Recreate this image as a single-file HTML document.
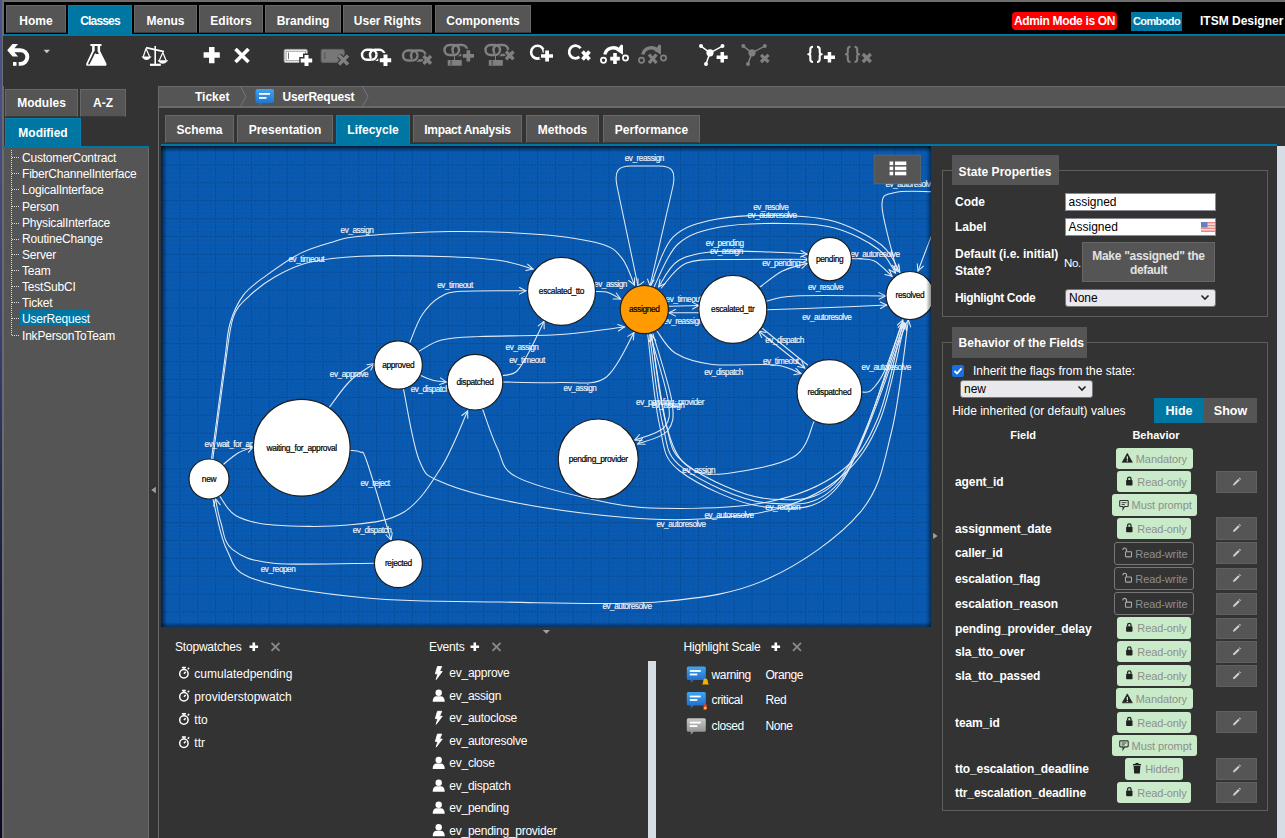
<!DOCTYPE html>
<html><head><meta charset="utf-8">
<style>
*{box-sizing:border-box;margin:0;padding:0}
html,body{width:1285px;height:838px;overflow:hidden;background:#333;font-family:"Liberation Sans",sans-serif;color:#fff}
.a{position:absolute}
.tab{position:absolute;background:#555;border:1px solid #686868;border-bottom-color:#3a3a3a;color:#fff;font-weight:bold;font-size:12px;text-align:center;white-space:nowrap}
.tab.on{background:#0077a3;border-color:#0a80ae;border-bottom-color:#0077a3}
.lbl{position:absolute;white-space:nowrap}
</style></head><body>
<!-- desktop strip -->
<div class="a" style="left:0;top:0;width:2px;height:838px;background:linear-gradient(#4a5590,#3a4070 40%,#1a1c40 70%,#0a0a25)"></div>
<div class="a" style="left:2px;top:0;width:1283px;height:1.5px;background:#6e6e6e"></div><div class="a" style="left:2px;top:0;width:1.5px;height:838px;background:#6e6e6e"></div>
<!-- top menu bar -->
<div class="a" style="left:3.5px;top:1.5px;width:1282px;height:32.5px;background:#000"></div>
<div class="a" style="left:3.5px;top:34px;width:1282px;height:2px;background:#0077a3"></div>
<div class="tab" style="left:6px;top:5px;width:60px;height:28px;line-height:30px">Home</div>
<div class="tab on" style="left:68px;top:5px;width:64px;height:30px;line-height:30px;letter-spacing:-0.85px">Classes</div>
<div class="tab" style="left:134px;top:5px;width:63px;height:28px;line-height:30px">Menus</div>
<div class="tab" style="left:199px;top:5px;width:64px;height:28px;line-height:30px">Editors</div>
<div class="tab" style="left:265px;top:5px;width:76px;height:28px;line-height:30px">Branding</div>
<div class="tab" style="left:343px;top:5px;width:89px;height:28px;line-height:30px">User Rights</div>
<div class="tab" style="left:435px;top:5px;width:96px;height:28px;line-height:30px">Components</div>
<div class="lbl" style="left:1012px;top:12px;width:105px;height:18px;background:#f00;border-radius:4px;font-weight:bold;font-size:12px;line-height:18px;text-align:center;letter-spacing:-0.35px">Admin Mode is ON</div>
<div class="lbl" style="left:1131px;top:12px;width:51px;height:19px;background:#0077a3;font-weight:bold;font-size:11px;line-height:19px;text-align:center;letter-spacing:-0.6px">Combodo</div>
<div class="lbl" style="left:1200px;top:12px;font-weight:bold;font-size:12px;line-height:18px">ITSM Designer</div>
<!-- toolbar -->
<div class="a" style="left:3px;top:36px;width:1282px;height:50px;background:#333"></div>
<svg class="a" style="left:0;top:0" width="900" height="86" viewBox="0 0 900 86">
<path d="M7.2 50.3 L12.5 44.1 H18.1 L14.4 48.2 H20.5 A8.8 8.8 0 0 1 20.5 65.8 H18.7 V61.9 H20.5 A4.85 4.85 0 0 0 20.5 52.2 H14.4 L18.1 56.6 H12.5 Z" fill="#fff"/>
<rect x="13" y="62" width="3.5" height="3.8" fill="#fff"/>
<path d="M43.6 49.7 H50 L46.8 53.3 Z" fill="#ccc"/>
<!-- flask -->
<path d="M90.4 43.9 H101.5 V46 H100.1 V51 L106.4 63.4 Q107.1 65.8 104.7 65.8 H87.9 Q85.5 65.8 86.3 63.4 L92.1 51 V46 H90.4 Z" fill="#fff"/>
<path d="M94.7 46 H97.6 V51.6 L99 53.9 H95.9 L94.7 52.3 Z" fill="#333"/>
<path d="M94.8 51.8 L89 63.7" stroke="#333" stroke-width="1.7" stroke-linecap="round"/>
<!-- scales -->
<g stroke="#fff" fill="none" stroke-width="1.6">
 <path d="M146 47.6 L164 51.6"/>
 <path d="M155.2 46 V64"/>
 <path d="M150 64.8 H160.8" stroke-width="2.2"/>
 <path d="M146 48.5 L143.2 57 M146 48.5 L149.8 57" stroke-width="1.2"/>
 <path d="M143 57.2 Q146.4 61.5 150 57.2 Z" fill="#fff" stroke-width="1.4"/>
 <path d="M162.8 52.5 L159.2 60.8 M162.8 52.5 L166.2 60.8" stroke-width="1.2"/>
 <path d="M159 61 Q162.8 65.2 166.6 61 Z" fill="#fff" stroke-width="1.4"/>
</g>
<!-- plus & x -->
<path d="M209 47 H214.5 V52.3 H219.8 V57.8 H214.5 V63.2 H209 V57.8 H203.6 V52.3 H209 Z" fill="#fff"/>
<path d="M235.5 49 L248.5 62 M248.5 49 L235.5 62" stroke="#fff" stroke-width="3.6"/>
<!-- attr add -->
<rect x="284.2" y="49.4" width="23" height="13" rx="1.5" fill="#fff" stroke="#aaa" stroke-width="1"/>
<rect x="286" y="51.2" width="19.5" height="9.5" fill="#fff" stroke="#888" stroke-width="0.8"/>
<path d="M288.5 52.5 V59" stroke="#777" stroke-width="1"/>
<path d="M304.5 55 H308.5 V58.5 H312.2 V62.5 H308.5 V66 H304.5 V62.5 H300.7 V58.5 H304.5 Z" fill="#fff" stroke="#333" stroke-width="3" paint-order="stroke"/>
<!-- attr del -->
<rect x="321.2" y="49.4" width="23" height="13" rx="1.5" fill="#777" stroke="#666" stroke-width="1"/>
<path d="M324.8 52.5 V59" stroke="#555" stroke-width="1"/>
<path d="M339 55.5 L348 64.5 M348 55.5 L339 64.5" stroke="#333" stroke-width="5.5"/>
<path d="M339 55.5 L348 64.5 M348 55.5 L339 64.5" stroke="#808080" stroke-width="3.4"/>
<!-- link add -->
<g fill="none" stroke="#fff" stroke-width="2.5"><rect x="362.0" y="49.8" width="14.5" height="10" rx="5"/><rect x="370.0" y="49.8" width="14.5" height="10" rx="5" stroke="#333" stroke-width="4.6" stroke-dasharray="0 17 9 100"/><rect x="370.0" y="49.8" width="14.5" height="10" rx="5"/><path d="M372.0,59.8 H371.5 A5 5 0 0 0 376.5,54.8" stroke="#333" stroke-width="4.6"/><path d="M371.5,59.8 A5 5 0 0 0 376.5,54.8"/></g>
<path d="M383.5 54.5 H387.5 V58.3 H391.2 V62.3 H387.5 V66 H383.5 V62.3 H379.8 V58.3 H383.5 Z" fill="#fff" stroke="#333" stroke-width="3" paint-order="stroke"/>
<!-- link del -->
<g fill="none" stroke="#808080" stroke-width="2.5"><rect x="403.0" y="50.6" width="14.5" height="10" rx="5"/><rect x="411.0" y="50.6" width="14.5" height="10" rx="5" stroke="#333" stroke-width="4.6" stroke-dasharray="0 17 9 100"/><rect x="411.0" y="50.6" width="14.5" height="10" rx="5"/><path d="M413.0,60.6 H412.5 A5 5 0 0 0 417.5,55.6" stroke="#333" stroke-width="4.6"/><path d="M412.5,60.6 A5 5 0 0 0 417.5,55.6"/></g>
<path d="M423.5 56 L431 63.8 M431 56 L423.5 63.8" stroke="#333" stroke-width="5.5"/>
<path d="M423.5 56 L431 63.8 M431 56 L423.5 63.8" stroke="#808080" stroke-width="3.4"/>
<!-- link sum add -->
<g fill="none" stroke="#808080" stroke-width="2.5"><rect x="444.5" y="45.0" width="14.5" height="10" rx="5"/><rect x="452.5" y="45.0" width="14.5" height="10" rx="5" stroke="#333" stroke-width="4.6" stroke-dasharray="0 17 9 100"/><rect x="452.5" y="45.0" width="14.5" height="10" rx="5"/><path d="M454.5,55.0 H454.0 A5 5 0 0 0 459.0,50.0" stroke="#333" stroke-width="4.6"/><path d="M454.0,55.0 A5 5 0 0 0 459.0,50.0"/></g>
<path d="M454.5 56 V60" stroke="#808080" stroke-width="1"/>
<rect x="447.7" y="60" width="14" height="5.7" fill="#808080"/>
<path d="M450 61.2 H452 L451 62.7 L452 64.2 H450" stroke="#444" stroke-width="0.8" fill="none"/>
<path d="M466.5 50.3 H470.2 V54 H474 V57.8 H470.2 V61.5 H466.5 V57.8 H462.8 V54 H466.5 Z" fill="#808080" stroke="#333" stroke-width="3" paint-order="stroke"/>
<!-- link sum del -->
<g fill="none" stroke="#808080" stroke-width="2.5"><rect x="485.5" y="45.0" width="14.5" height="10" rx="5"/><rect x="493.5" y="45.0" width="14.5" height="10" rx="5" stroke="#333" stroke-width="4.6" stroke-dasharray="0 17 9 100"/><rect x="493.5" y="45.0" width="14.5" height="10" rx="5"/><path d="M495.5,55.0 H495.0 A5 5 0 0 0 500.0,50.0" stroke="#333" stroke-width="4.6"/><path d="M495.0,55.0 A5 5 0 0 0 500.0,50.0"/></g>
<path d="M495.5 56 V60" stroke="#808080" stroke-width="1"/>
<rect x="488.8" y="60" width="14" height="5.7" fill="#808080"/>
<path d="M491 61.2 H493 L492 62.7 L493 64.2 H491" stroke="#444" stroke-width="0.8" fill="none"/>
<path d="M506 51.5 L513.5 59.3 M513.5 51.5 L506 59.3" stroke="#333" stroke-width="5.5"/>
<path d="M506 51.5 L513.5 59.3 M513.5 51.5 L506 59.3" stroke="#808080" stroke-width="3.4"/>
<!-- circle add/del -->
<circle cx="537.5" cy="52.2" r="6.4" fill="none" stroke="#fff" stroke-width="2.6"/>
<path d="M545.2 50.6 H549 V54.3 H553 V57.8 H549 V61.4 H545.2 V57.8 H541 V54.3 H545.2 Z" fill="#fff" stroke="#333" stroke-width="3" paint-order="stroke"/>
<path d="M580.6 48.3 A6.3 6.3 0 1 0 579.4 56.9" fill="none" stroke="#fff" stroke-width="2.7"/>
<path d="M582.5 51.5 L589.5 59.5 M589.5 51.5 L582.5 59.5" stroke="#333" stroke-width="6.5"/>
<path d="M582.5 51.5 L589.5 59.5 M589.5 51.5 L582.5 59.5" stroke="#fff" stroke-width="3.6"/>
<!-- transition add -->
<path d="M604.8 54.5 A8.6 8.6 0 0 1 619.5 50.5" fill="none" stroke="#fff" stroke-width="3.4"/>
<path d="M616.5 50.8 L621 44.6 L623 45.2 L623 54.8 Z" fill="#fff"/>
<circle cx="603.5" cy="60.2" r="2.6" fill="none" stroke="#fff" stroke-width="1.7"/>
<circle cx="625.5" cy="58" r="2.6" fill="none" stroke="#fff" stroke-width="1.7"/>
<path d="M613.2 53 H616.8 V56.8 H619.8 V60.4 H616.8 V64 H613.2 V60.4 H610.2 V56.8 H613.2 Z" fill="#fff" stroke="#333" stroke-width="3" paint-order="stroke"/>
<!-- transition del -->
<path d="M642.8 54.5 A8.6 8.6 0 0 1 657.5 50.5" fill="none" stroke="#808080" stroke-width="3.4"/>
<path d="M654.5 50.8 L659 44.6 L661 45.2 L661 54.8 Z" fill="#808080"/>
<circle cx="641.5" cy="60.2" r="2.6" fill="none" stroke="#808080" stroke-width="1.7"/>
<circle cx="663.5" cy="58" r="2.6" fill="none" stroke="#808080" stroke-width="1.7"/>
<path d="M649 54.5 L656.5 63 M656.5 54.5 L649 63" stroke="#333" stroke-width="6"/>
<path d="M649 54.5 L656.5 63 M656.5 54.5 L649 63" stroke="#808080" stroke-width="3.4"/>
<!-- node add -->
<g stroke="#fff" stroke-width="1.5" fill="none"><path d="M701 46.1 L710 52.8 L722.5 46.1 M710 52.8 L706 63.9"/></g>
<g fill="#fff"><circle cx="701" cy="46.1" r="2"/><circle cx="722.5" cy="46.1" r="2"/><circle cx="710" cy="52.8" r="3.6"/><circle cx="706" cy="63.9" r="2"/></g>
<path d="M720.5 52 H724 V55.4 H727.7 V58.9 H724 V62.4 H720.5 V58.9 H716.6 V55.4 H720.5 Z" fill="#fff"/>
<!-- node del -->
<g stroke="#808080" stroke-width="1.5" fill="none"><path d="M743.3 46.1 L752 52.8 L764.8 46.1 M752 52.8 L748 63.9"/></g>
<g fill="#808080"><circle cx="743.3" cy="46.1" r="2"/><circle cx="764.8" cy="46.1" r="2"/><circle cx="752" cy="52.8" r="3.6"/><circle cx="748" cy="63.9" r="2"/></g>
<path d="M761 54.8 L768.5 62 M768.5 54.8 L761 62" stroke="#808080" stroke-width="3.2"/>
</svg>
<svg class="a" style="left:0;top:0" width="900" height="86"><g fill="none" stroke="#fff" stroke-width="2.1" stroke-linejoin="round"><path d="M813.0,46.8 Q810.3,46.8 810.3,49.5 V52.3 Q810.3,54.2 808.3,54.2 Q810.3,54.2 810.3,56.1 V59.3 Q810.3,62 813.0,62"/><path d="M817.0,46.8 Q819.7,46.8 819.7,49.5 V52.3 Q819.7,54.2 821.7,54.2 Q819.7,54.2 819.7,56.1 V59.3 Q819.7,62 817.0,62"/></g><g fill="none" stroke="#808080" stroke-width="2.1" stroke-linejoin="round"><path d="M850.5,46.8 Q847.8,46.8 847.8,49.5 V52.3 Q847.8,54.2 845.8,54.2 Q847.8,54.2 847.8,56.1 V59.3 Q847.8,62 850.5,62"/><path d="M854.5,46.8 Q857.2,46.8 857.2,49.5 V52.3 Q857.2,54.2 859.2,54.2 Q857.2,54.2 857.2,56.1 V59.3 Q857.2,62 854.5,62"/></g></svg>
<svg class="a" style="left:0;top:0" width="900" height="86" viewBox="0 0 900 86">
<path d="M827.7 52 H831.2 V55.4 H835 V58.9 H831.2 V62.4 H827.7 V58.9 H823.9 V55.4 H827.7 Z" fill="#fff"/>
<path d="M862.8 54 L870.8 62 M870.8 54 L862.8 62" stroke="#808080" stroke-width="3.2"/>
</svg>



<!-- left sidebar -->
<div class="a" style="left:2px;top:86px;width:2px;height:752px;background:#6b6b6b"></div>
<div class="tab" style="left:5px;top:89px;width:73px;height:28px;line-height:26px">Modules</div>
<div class="tab" style="left:80px;top:89px;width:46px;height:28px;line-height:26px">A-Z</div>
<div class="tab on" style="left:5px;top:118px;width:76px;height:29px;line-height:29px">Modified</div>
<div class="a" style="left:3px;top:146px;width:146px;height:2px;background:#0077a3"></div>
<div class="a" style="left:4px;top:148px;width:145px;height:690px;background:#555;border-right:1.5px solid #6a6a6a"></div>
<svg class="a" style="left:0;top:0" width="150" height="345"><g stroke="#ddd" stroke-width="1" stroke-dasharray="1 1">
<path d="M11.5 150 V336"/>
<path d="M12 157.5 H19"/>
<path d="M12 173.5 H19"/>
<path d="M12 189.5 H19"/>
<path d="M12 206.5 H19"/>
<path d="M12 223.5 H19"/>
<path d="M12 239.5 H19"/>
<path d="M12 254.5 H19"/>
<path d="M12 270.5 H19"/>
<path d="M12 286.5 H19"/>
<path d="M12 302.5 H19"/>
<path d="M12 318.5 H19"/>
<path d="M12 335.5 H19"/>
</g></svg>
<div class="a" style="left:20px;top:310px;width:70px;height:15px;background:#0077a3"></div>
<div class="lbl" style="left:22px;top:149.8px;font-size:12px;line-height:16px;letter-spacing:-0.2px">CustomerContract</div>
<div class="lbl" style="left:22px;top:165.6px;font-size:12px;line-height:16px;letter-spacing:-0.2px">FiberChannelInterface</div>
<div class="lbl" style="left:22px;top:181.9px;font-size:12px;line-height:16px;letter-spacing:-0.2px">LogicalInterface</div>
<div class="lbl" style="left:22px;top:198.5px;font-size:12px;line-height:16px;letter-spacing:-0.2px">Person</div>
<div class="lbl" style="left:22px;top:215.0px;font-size:12px;line-height:16px;letter-spacing:-0.2px">PhysicalInterface</div>
<div class="lbl" style="left:22px;top:231.0px;font-size:12px;line-height:16px;letter-spacing:-0.2px">RoutineChange</div>
<div class="lbl" style="left:22px;top:246.8px;font-size:12px;line-height:16px;letter-spacing:-0.2px">Server</div>
<div class="lbl" style="left:22px;top:262.7px;font-size:12px;line-height:16px;letter-spacing:-0.2px">Team</div>
<div class="lbl" style="left:22px;top:278.7px;font-size:12px;line-height:16px;letter-spacing:-0.2px">TestSubCI</div>
<div class="lbl" style="left:22px;top:294.7px;font-size:12px;line-height:16px;letter-spacing:-0.2px">Ticket</div>
<div class="lbl" style="left:22px;top:310.5px;font-size:12px;line-height:16px;letter-spacing:-0.2px">UserRequest</div>
<div class="lbl" style="left:22px;top:327.5px;font-size:12px;line-height:16px;letter-spacing:-0.2px">InkPersonToTeam</div>

<!-- breadcrumb bar -->
<div class="a" style="left:158px;top:86px;width:1127px;height:21px;background:#555;border-top:1px solid #6a6a6a"></div>
<div class="a" style="left:158px;top:106px;width:1127px;height:2px;background:#6a6a6a"></div>
<div class="a" style="left:158px;top:86px;width:1.4px;height:752px;background:#6a6a6a"></div>
<div class="lbl" style="left:195px;top:89px;font-size:12px;font-weight:bold;line-height:16px">Ticket</div>
<svg class="a" style="left:0;top:0" width="380" height="108"><g fill="none" stroke="#777" stroke-width="1"><path d="M240.5 86.5 L246 96.5 L240.5 106.5"/><path d="M362.5 86.5 L368 96.5 L362.5 106.5"/></g>
<defs><linearGradient id="bub" x1="0" y1="0" x2="0" y2="1"><stop offset="0" stop-color="#3fa4f0"/><stop offset="1" stop-color="#1b6cc8"/></linearGradient></defs>
<path d="M257.5 89 H272 Q274 89 274 91 V101 Q274 103 272 103 H262 L259 106 V103 H257.5 Q255.5 103 255.5 101 V91 Q255.5 89 257.5 89 Z" fill="url(#bub)"/>
<rect x="259" y="93" width="11" height="1.8" fill="#fff"/><rect x="259" y="97" width="7.5" height="1.8" fill="#fff"/></svg>
<div class="lbl" style="left:282.5px;top:89px;font-size:12px;font-weight:bold;line-height:16px;letter-spacing:-0.2px">UserRequest</div>


<!-- tabs -->
<div class="tab" style="left:165px;top:115px;width:69px;height:28px;line-height:29px">Schema</div>
<div class="tab" style="left:237px;top:115px;width:96px;height:28px;line-height:29px">Presentation</div>
<div class="tab on" style="left:336px;top:115px;width:74px;height:29px;line-height:29px">Lifecycle</div>
<div class="tab" style="left:413px;top:115px;width:109px;height:28px;line-height:29px;letter-spacing:-0.3px">Impact Analysis</div>
<div class="tab" style="left:526px;top:115px;width:73px;height:28px;line-height:29px">Methods</div>
<div class="tab" style="left:603px;top:115px;width:97px;height:28px;line-height:29px">Performance</div>
<div class="a" style="left:161px;top:144px;width:1116px;height:2px;background:#0077a3"></div>

<!-- diagram -->
<!--DIAG-START--><svg class="a" style="left:161px;top:146px" width="770" height="481" viewBox="161 146 770 481">
<defs>
<pattern id="grid" x="179.4" y="164.4" width="17.88" height="17.88" patternUnits="userSpaceOnUse">
<path d="M0.5 0 V17.88 M0 0.5 H17.88" stroke="#023468" stroke-width="1" stroke-dasharray="1.5 1.5" opacity="0.6"/>
<path d="M4.47 0 V17.88 M8.94 0 V17.88 M13.41 0 V17.88 M0 4.47 H17.88 M0 8.94 H17.88 M0 13.41 H17.88" stroke="#04468c" stroke-width="0.6" opacity="0.25"/>
</pattern>
<linearGradient id="shT" x1="0" y1="0" x2="0" y2="1"><stop offset="0" stop-color="#000" stop-opacity="0.7"/><stop offset="1" stop-color="#000" stop-opacity="0"/></linearGradient>
<linearGradient id="shL" x1="0" y1="0" x2="1" y2="0"><stop offset="0" stop-color="#000" stop-opacity="0.6"/><stop offset="1" stop-color="#000" stop-opacity="0"/></linearGradient>
<linearGradient id="shR" x1="1" y1="0" x2="0" y2="0"><stop offset="0" stop-color="#000" stop-opacity="0.45"/><stop offset="1" stop-color="#000" stop-opacity="0"/></linearGradient>
<linearGradient id="shB" x1="0" y1="1" x2="0" y2="0"><stop offset="0" stop-color="#000" stop-opacity="0.45"/><stop offset="1" stop-color="#000" stop-opacity="0"/></linearGradient>
</defs>
<rect x="161" y="146" width="770" height="481" fill="#095ab2"/>
<rect x="161" y="146" width="770" height="481" fill="url(#grid)"/>
<g fill="none" stroke="#e3ebf5" stroke-width="1.05" stroke-linecap="round">
<path d="M211.5,459.0 C213.7,442.5 221.6,382.6 224.7,360.0 C227.8,337.4 226.9,334.3 230.0,323.5 C233.1,312.7 237.3,303.2 243.4,295.1 C249.5,287.0 257.3,282.1 266.8,275.1 C276.3,268.2 289.1,259.0 300.2,253.4 C311.3,247.8 323.6,244.6 333.6,241.7 C343.6,238.8 340.6,237.9 360.0,236.2 C379.4,234.5 420.0,231.8 450.0,231.5 C480.0,231.2 514.9,232.4 540.0,234.5 C565.1,236.6 586.8,239.9 600.4,243.8 C614.0,247.7 616.2,251.2 621.9,258.1 C627.6,265.0 632.3,280.5 634.4,285.0"/>
<path d="M-6.5,-3.3 L0,0 L-6.5,3.3" transform="translate(634.4,285.0) rotate(65.0)"/>
<path d="M212.8,459.0 C215.0,442.5 222.5,383.7 225.9,360.0 C229.3,336.3 229.7,327.3 233.4,316.8 C237.2,306.3 241.4,303.5 248.4,296.8 C255.4,290.1 265.1,282.5 275.1,276.8 C285.1,271.1 294.4,266.0 308.5,262.6 C322.6,259.2 337.8,257.2 360.0,256.2 C382.2,255.2 418.2,255.8 441.5,256.5 C464.8,257.2 484.8,258.4 500.0,260.5 C515.2,262.6 527.5,267.6 533.0,269.0"/>
<path d="M-6.5,-3.3 L0,0 L-6.5,3.3" transform="translate(533.0,269.0) rotate(14.3)"/>
<path d="M595.0,291.5 C597.2,291.7 603.8,291.2 608.0,292.5 C612.2,293.8 618.4,297.9 620.5,299.0"/>
<path d="M-6.5,-3.3 L0,0 L-6.5,3.3" transform="translate(620.5,299.0) rotate(27.6)"/>
<path d="M410.0,342.0 C412.0,337.5 417.0,322.5 422.0,315.0 C427.0,307.5 433.3,300.9 440.0,297.0 C446.7,293.1 447.7,292.3 462.0,291.3 C476.3,290.3 515.3,290.9 526.0,290.8"/>
<path d="M-6.5,-3.3 L0,0 L-6.5,3.3" transform="translate(526.0,290.8) rotate(-0.5)"/>
<path d="M419.0,351.3 C422.8,349.4 431.3,342.5 441.5,340.0 C451.7,337.5 460.2,337.4 480.0,336.5 C499.8,335.6 535.9,336.1 560.0,334.5 C584.1,332.9 613.8,328.2 624.5,327.0"/>
<path d="M-6.5,-3.3 L0,0 L-6.5,3.3" transform="translate(624.5,327.0) rotate(-6.4)"/>
<path d="M503.0,375.6 C505.3,374.8 512.5,375.3 517.0,371.0 C521.5,366.7 525.5,358.3 530.0,350.0 C534.5,341.7 541.7,326.2 544.0,321.4"/>
<path d="M-6.5,-3.3 L0,0 L-6.5,3.3" transform="translate(544.0,321.4) rotate(-64.4)"/>
<path d="M503.0,382.0 C512.5,382.1 543.0,383.2 560.0,382.5 C577.0,381.8 592.7,386.3 605.0,378.0 C617.3,369.7 629.2,340.2 634.0,332.6"/>
<path d="M-6.5,-3.3 L0,0 L-6.5,3.3" transform="translate(634.0,332.6) rotate(-57.7)"/>
<path d="M419.0,374.8 C421.2,375.7 427.4,378.8 432.0,380.0 C436.6,381.2 444.1,381.7 446.5,382.0"/>
<path d="M-6.5,-3.3 L0,0 L-6.5,3.3" transform="translate(446.5,382.0) rotate(7.1)"/>
<path d="M329.4,407.3 C332.8,402.9 342.5,388.3 350.0,381.0 C357.5,373.7 370.2,366.5 374.2,363.6"/>
<path d="M-6.5,-3.3 L0,0 L-6.5,3.3" transform="translate(374.2,363.6) rotate(-35.9)"/>
<path d="M223.4,464.4 C225.8,462.5 233.0,455.9 238.0,453.0 C243.0,450.1 250.8,447.8 253.4,446.8"/>
<path d="M-6.5,-3.3 L0,0 L-6.5,3.3" transform="translate(253.4,446.8) rotate(-21.0)"/>
<path d="M219.2,495.3 C222.0,498.7 227.0,510.8 236.0,515.8 C245.0,520.8 254.7,523.5 273.4,525.0 C292.1,526.5 326.2,527.2 348.0,525.0 C369.8,522.8 388.4,521.7 404.0,512.0 C419.6,502.3 430.9,483.8 441.5,467.0 C452.1,450.2 463.2,420.3 467.6,411.0"/>
<path d="M-6.5,-3.3 L0,0 L-6.5,3.3" transform="translate(467.6,411.0) rotate(-64.7)"/>
<path d="M350.0,450.4 C351.7,450.7 357.2,450.1 360.0,452.0 C362.8,453.9 361.8,447.3 367.0,462.0 C372.2,476.7 387.0,527.0 391.0,540.0"/>
<path d="M-6.5,-3.3 L0,0 L-6.5,3.3" transform="translate(391.0,540.0) rotate(72.9)"/>
<path d="M374.2,563.2 C357.4,563.2 297.0,565.5 273.4,563.2 C249.7,560.9 241.0,556.1 232.3,549.4 C223.6,542.7 223.8,531.4 221.0,523.0 C218.2,514.6 216.4,503.0 215.5,499.0"/>
<path d="M-6.5,-3.3 L0,0 L-6.5,3.3" transform="translate(215.5,499.0) rotate(-102.7)"/>
<path d="M213.0,499.0 C215.3,507.4 219.8,536.0 226.7,549.4 C233.6,562.8 231.3,571.2 254.7,579.3 C278.1,587.4 325.9,594.2 366.8,598.0 C407.7,601.8 451.1,601.4 500.0,602.0 C548.9,602.6 615.4,605.6 660.0,601.7 C704.6,597.8 734.5,593.7 767.9,578.8 C801.3,563.9 839.7,536.8 860.3,512.2 C880.9,487.6 883.7,463.0 891.7,431.0 C899.7,399.0 905.6,338.5 908.4,320.0"/>
<path d="M-6.5,-3.3 L0,0 L-6.5,3.3" transform="translate(908.4,320.0) rotate(-81.4)"/>
<path d="M403.4,388.6 C406.0,400.5 412.6,444.2 419.0,459.8 C425.4,475.4 425.3,474.9 441.5,482.0 C457.7,489.1 486.2,496.9 516.0,502.7 C545.8,508.5 589.3,514.3 620.0,517.0 C650.7,519.7 673.3,520.5 700.0,519.0 C726.7,517.5 756.3,515.2 780.0,508.0 C803.7,500.8 825.3,490.7 842.0,476.0 C858.7,461.3 869.5,445.5 880.0,420.0 C890.5,394.5 900.6,339.2 904.7,323.0"/>
<path d="M-6.5,-3.3 L0,0 L-6.5,3.3" transform="translate(904.7,323.0) rotate(-75.8)"/>
<path d="M482.6,409.3 C485.1,415.9 491.9,437.4 497.5,448.6 C503.1,459.8 500.4,468.2 516.0,476.6 C531.6,485.0 567.0,493.7 591.0,499.0 C615.0,504.3 630.5,507.8 660.0,508.3 C689.5,508.8 737.9,508.1 767.9,502.0 C797.9,495.9 821.6,486.0 840.0,472.0 C858.4,458.0 867.5,443.0 878.0,418.0 C888.5,393.0 898.8,338.0 903.0,322.0"/>
<path d="M-6.5,-3.3 L0,0 L-6.5,3.3" transform="translate(903.0,322.0) rotate(-75.3)"/>
<path d="M657.0,331.0 C660.1,334.7 666.3,347.7 675.5,353.3 C684.7,358.9 695.8,362.4 712.4,364.4 C729.0,366.3 760.2,363.5 775.0,365.0 C789.8,366.5 796.7,372.2 801.0,373.6"/>
<path d="M-6.5,-3.3 L0,0 L-6.5,3.3" transform="translate(801.0,373.6) rotate(18.0)"/>
<path d="M758.6,331.0 L804.8,368.0"/>
<path d="M-6.5,-3.3 L0,0 L-6.5,3.3" transform="translate(804.8,368.0) rotate(38.7)"/>
<path d="M-6.5,-3.3 L0,0 L-6.5,3.3" transform="translate(758.6,331.0) rotate(-141.3)"/>
<path d="M762.5,328.5 L807.5,365.0"/>
<path d="M862.0,392.0 C863.6,391.7 867.6,393.9 871.4,390.2 C875.2,386.5 879.8,381.7 885.0,370.0 C890.2,358.3 899.8,328.3 902.8,320.0"/>
<path d="M-6.5,-3.3 L0,0 L-6.5,3.3" transform="translate(902.8,320.0) rotate(-70.1)"/>
<path d="M814.0,421.7 C810.6,427.6 808.3,448.2 793.8,456.8 C779.3,465.4 744.5,471.5 727.2,473.4 C709.9,475.2 699.9,475.0 690.0,467.9 C680.1,460.8 674.4,453.2 668.0,431.0 C661.6,408.8 654.2,350.8 651.4,334.8"/>
<path d="M-6.5,-3.3 L0,0 L-6.5,3.3" transform="translate(651.4,334.8) rotate(-99.9)"/>
<path d="M649.6,334.8 C651.8,349.6 657.0,401.3 662.5,423.5 C668.0,445.7 665.2,454.6 682.8,467.9 C700.4,481.1 741.4,501.1 767.9,503.0 C794.4,504.9 818.8,508.9 841.8,479.0 C864.8,449.1 895.3,349.6 906.0,323.7"/>
<path d="M-6.5,-3.3 L0,0 L-6.5,3.3" transform="translate(906.0,323.7) rotate(-67.6)"/>
<path d="M651.5,334.5 C653.8,349.1 659.6,400.2 665.5,422.0 C671.4,443.8 669.4,452.2 686.8,465.0 C704.2,477.8 744.0,497.5 770.0,499.0 C796.0,500.5 820.7,503.2 843.0,474.0 C865.3,444.8 893.8,348.8 904.0,323.7"/>
<path d="M647.8,335.0 C649.8,350.0 654.2,402.3 659.5,425.0 C664.8,447.7 662.1,457.3 679.8,471.0 C697.5,484.7 739.1,505.0 765.9,507.0 C792.7,509.0 818.1,513.5 840.8,483.0 C863.5,452.4 891.8,350.2 902.0,323.7"/>
<path d="M650.0,334.0 C653.0,345.0 665.6,384.5 668.0,400.0 C670.4,415.5 669.9,420.5 664.4,427.2 C658.9,433.9 639.7,438.0 634.8,440.1"/>
<path d="M-6.5,-3.3 L0,0 L-6.5,3.3" transform="translate(634.8,440.1) rotate(156.8)"/>
<path d="M653.0,334.0 C656.2,345.3 669.6,385.8 672.0,402.0 C674.4,418.2 673.1,424.0 667.4,431.0 C661.7,438.0 642.7,441.8 637.8,444.0"/>
<path d="M-6.5,-3.3 L0,0 L-6.5,3.3" transform="translate(637.8,444.0) rotate(155.8)"/>
<path d="M931.0,191.6 C925.0,191.7 903.2,190.0 895.0,192.4 C886.8,194.8 881.7,192.9 882.0,206.0 C882.3,219.1 894.5,260.2 897.0,271.0"/>
<path d="M-6.5,-3.3 L0,0 L-6.5,3.3" transform="translate(897.0,271.0) rotate(77.0)"/>
<path d="M931.0,237.0 L918.0,271.0"/>
<path d="M-6.5,-3.3 L0,0 L-6.5,3.3" transform="translate(918.0,271.0) rotate(110.9)"/>
<path d="M650.8,285.5 C654.5,277.4 661.9,248.3 673.0,237.2 C684.1,226.1 699.0,222.6 717.3,219.0 C735.5,215.4 763.0,215.1 782.5,215.5 C802.0,215.9 818.1,216.7 834.6,221.6 C851.1,226.5 870.6,236.5 881.5,245.0 C892.4,253.5 896.8,267.8 899.8,272.4"/>
<path d="M-6.5,-3.3 L0,0 L-6.5,3.3" transform="translate(899.8,272.4) rotate(56.9)"/>
<path d="M654.0,287.0 C658.0,279.8 667.0,254.0 678.0,244.0 C689.0,234.0 702.6,230.4 720.0,227.0 C737.4,223.6 763.4,223.2 782.5,223.4 C801.6,223.6 818.7,223.7 834.6,228.0 C850.5,232.3 867.9,241.5 878.0,249.0 C888.1,256.5 892.6,269.0 895.5,273.0"/>
<path d="M-6.5,-3.3 L0,0 L-6.5,3.3" transform="translate(895.5,273.0) rotate(54.1)"/>
<path d="M658.7,286.8 C662.0,282.4 668.4,266.6 678.2,260.7 C688.0,254.8 699.9,253.0 717.3,251.6 C734.7,250.2 767.5,252.0 782.5,252.4 C797.5,252.8 803.1,253.9 807.2,254.2"/>
<path d="M-6.5,-3.3 L0,0 L-6.5,3.3" transform="translate(807.2,254.2) rotate(4.2)"/>
<path d="M-6.5,-3.3 L0,0 L-6.5,3.3" transform="translate(658.7,286.8) rotate(126.9)"/>
<path d="M661.3,288.0 C665.4,283.9 674.5,268.1 686.0,263.3 C697.5,258.5 709.9,260.0 730.3,259.4 C750.7,258.8 795.5,259.4 808.5,259.4"/>
<path d="M-6.5,-3.3 L0,0 L-6.5,3.3" transform="translate(808.5,259.4) rotate(0.0)"/>
<path d="M760.3,286.8 C764.0,284.2 774.7,274.9 782.5,271.0 C790.3,267.1 803.1,264.6 807.2,263.3"/>
<path d="M-6.5,-3.3 L0,0 L-6.5,3.3" transform="translate(807.2,263.3) rotate(-17.6)"/>
<path d="M851.6,258.6 C855.3,259.0 867.0,257.8 873.7,260.7 C880.4,263.6 889.0,273.7 892.0,276.3"/>
<path d="M-6.5,-3.3 L0,0 L-6.5,3.3" transform="translate(892.0,276.3) rotate(40.9)"/>
<path d="M766.8,301.0 C771.6,300.1 775.7,296.8 795.5,295.9 C815.3,295.0 870.5,295.9 885.5,295.9"/>
<path d="M-6.5,-3.3 L0,0 L-6.5,3.3" transform="translate(885.5,295.9) rotate(0.0)"/>
<path d="M766.8,309.7 C777.3,309.3 810.0,308.3 830.0,307.5 C850.0,306.7 877.3,305.4 886.8,305.0"/>
<path d="M-6.5,-3.3 L0,0 L-6.5,3.3" transform="translate(886.8,305.0) rotate(-2.4)"/>
<path d="M669.0,306.3 L699.0,305.5"/>
<path d="M-6.5,-3.3 L0,0 L-6.5,3.3" transform="translate(699.0,305.5) rotate(-1.5)"/>
<path d="M699.0,312.8 L669.0,312.8"/>
<path d="M-6.5,-3.3 L0,0 L-6.5,3.3" transform="translate(669.0,312.8) rotate(180.0)"/>
<path d="M638,286 L617,186 C614,171 618,166 631,166 L659,166 C672,166 676,171 673,186 L650,286"/>
<path d="M-6.5,-3.3 L0,0 L-6.5,3.3" transform="translate(638.0,286.0) rotate(116.6)"/>
<path d="M-6.5,-3.3 L0,0 L-6.5,3.3" transform="translate(650.0,286.0) rotate(97.1)"/>
</g>
<g font-family="Liberation Sans" font-size="8.2" letter-spacing="-0.45" text-anchor="middle" fill="#f4f8fc" stroke="#f4f8fc" stroke-width="0.15">
<text x="644.3" y="161.3">ev_reassign</text>
<text x="357" y="232.5">ev_assign</text>
<text x="306.3" y="262.2">ev_timeout</text>
<text x="455" y="288">ev_timeout</text>
<text x="610.5" y="287.2">ev_assign</text>
<text x="683.4" y="301.5">ev_timeout</text>
<text x="683" y="323.7">ev_reassign</text>
<text x="770.7" y="210.3">ev_resolve</text>
<text x="772" y="218">ev_autoresolve</text>
<text x="724.6" y="246">ev_pending</text>
<text x="726.4" y="254.1">ev_assign</text>
<text x="781.2" y="266.3">ev_pending</text>
<text x="875" y="257.2">ev_autoresolve</text>
<text x="825.5" y="289.8">ev_resolve</text>
<text x="826.8" y="320.3">ev_autoresolve</text>
<text x="910" y="186.5">ev_autoresolve</text>
<text x="349" y="376.5">ev_approve</text>
<text x="430" y="392">ev_dispatch</text>
<text x="239" y="447.3">ev_wait_for_approval</text>
<text x="522" y="350">ev_assign</text>
<text x="527" y="362.5">ev_timeout</text>
<text x="580" y="390.5">ev_assign</text>
<text x="375" y="486">ev_reject</text>
<text x="372" y="533">ev_dispatch</text>
<text x="278" y="572">ev_reopen</text>
<text x="627" y="609">ev_autoresolve</text>
<text x="784.5" y="343.3">ev_dispatch</text>
<text x="780.8" y="363.7">ev_timeout</text>
<text x="723.5" y="374.8">ev_dispatch</text>
<text x="886.2" y="370.3">ev_autoresolve</text>
<text x="670" y="405">ev_pending_provider</text>
<text x="668" y="408">ev_assign</text>
<text x="698.7" y="472.7">ev_assign</text>
<text x="782.7" y="510.4">ev_reopen</text>
<text x="729" y="517.8">ev_autoresolve</text>
<text x="681" y="527">ev_autoresolve</text>
</g>
<circle cx="209" cy="479" r="20" fill="#fff" stroke="#1e1e1e" stroke-width="1.2"/>
<circle cx="301.7" cy="447.7" r="48.4" fill="#fff" stroke="#1e1e1e" stroke-width="1.2"/>
<circle cx="398.2" cy="365" r="24.2" fill="#fff" stroke="#1e1e1e" stroke-width="1.2"/>
<circle cx="475" cy="382.2" r="27.8" fill="#fff" stroke="#1e1e1e" stroke-width="1.2"/>
<circle cx="398.4" cy="563.6" r="24" fill="#fff" stroke="#1e1e1e" stroke-width="1.2"/>
<circle cx="561.5" cy="291.3" r="34" fill="#fff" stroke="#1e1e1e" stroke-width="1.2"/>
<circle cx="644.3" cy="309.6" r="24.1" fill="#ff9a00" stroke="#1e1e1e" stroke-width="1.2"/>
<circle cx="732.8" cy="309.3" r="34" fill="#fff" stroke="#1e1e1e" stroke-width="1.2"/>
<circle cx="829.6" cy="259.1" r="21.8" fill="#fff" stroke="#1e1e1e" stroke-width="1.2"/>
<circle cx="910" cy="295.5" r="24" fill="#fff" stroke="#1e1e1e" stroke-width="1.2"/>
<circle cx="829.4" cy="392" r="32.4" fill="#fff" stroke="#1e1e1e" stroke-width="1.2"/>
<circle cx="598.2" cy="459" r="40" fill="#fff" stroke="#1e1e1e" stroke-width="1.2"/>
<g font-family="Liberation Sans" font-size="8.4" letter-spacing="-0.35" text-anchor="middle" fill="#000" stroke="#000" stroke-width="0.2">
<text x="209" y="481.8">new</text>
<text x="301.7" y="450.5">waiting_for_approval</text>
<text x="398.2" y="367.8">approved</text>
<text x="475" y="385.0">dispatched</text>
<text x="398.4" y="566.4">rejected</text>
<text x="561.5" y="294.1">escalated_tto</text>
<text x="644.3" y="312.40000000000003">assigned</text>
<text x="732.8" y="312.1">escalated_ttr</text>
<text x="829.6" y="261.90000000000003">pending</text>
<text x="910" y="298.3">resolved</text>
<text x="829.4" y="394.8">redispatched</text>
<text x="598.2" y="461.8">pending_provider</text>
</g>
<rect x="161" y="146" width="770" height="6" fill="url(#shT)"/>
<rect x="161" y="146" width="6" height="481" fill="url(#shL)"/>
<rect x="926" y="146" width="5" height="481" fill="url(#shR)"/>
<rect x="161" y="622" width="770" height="5" fill="url(#shB)"/>
<rect x="874.2" y="155.1" width="46.4" height="28.7" fill="#555" stroke="#666" stroke-width="0.8"/>
<g fill="#fff"><rect x="889.6" y="161.5" width="3.6" height="3.6"/><rect x="889.6" y="166.6" width="3.6" height="3.6"/><rect x="889.6" y="171.7" width="3.6" height="3.6"/><rect x="895" y="161.5" width="11.3" height="3.6"/><rect x="895" y="166.6" width="11.3" height="3.6"/><rect x="895" y="171.7" width="11.3" height="3.6"/></g>
</svg><!--DIAG-END-->

<!-- bottom lists -->
<div class="lbl" style="left:175px;top:639px;font-size:12px;line-height:16px;letter-spacing:-0.2px">Stopwatches</div>
<div class="lbl" style="left:429px;top:639px;font-size:12px;line-height:16px;letter-spacing:-0.2px">Events</div>
<div class="lbl" style="left:683.5px;top:639px;font-size:12px;line-height:16px;letter-spacing:-0.2px">Highlight Scale</div>
<svg class="a" style="left:0;top:0" width="1285" height="838">
<path d="M252.5,642.5 h2.6 v3 h3 v2.6 h-3 v3 h-2.6 v-3 h-3 v-2.6 h3 z" fill="#fff"/>
<path d="M271.5,642.8 L279.5,650.8 M279.5,642.8 L271.5,650.8" stroke="#8a8a8a" stroke-width="1.8"/>
<path d="M473.5,642.5 h2.6 v3 h3 v2.6 h-3 v3 h-2.6 v-3 h-3 v-2.6 h3 z" fill="#fff"/>
<path d="M492.5,642.8 L500.5,650.8 M500.5,642.8 L492.5,650.8" stroke="#8a8a8a" stroke-width="1.8"/>
<path d="M774.5,642.5 h2.6 v3 h3 v2.6 h-3 v3 h-2.6 v-3 h-3 v-2.6 h3 z" fill="#fff"/>
<path d="M793,642.8 L801,650.8 M801,642.8 L793,650.8" stroke="#8a8a8a" stroke-width="1.8"/>
<g stroke="#fff" fill="none" stroke-width="1.5"><circle cx="183.9" cy="673.7" r="4.2"/><path d="M181.9 667.4000000000001 h4 M183.9 667.7 v1.5 M187.70000000000002 669.2 l1.5 -1.5 M183.9 673.7 l1.8 -1.8"/></g>
<g stroke="#fff" fill="none" stroke-width="1.5"><circle cx="183.9" cy="696.8" r="4.2"/><path d="M181.9 690.5 h4 M183.9 690.8 v1.5 M187.70000000000002 692.3 l1.5 -1.5 M183.9 696.8 l1.8 -1.8"/></g>
<g stroke="#fff" fill="none" stroke-width="1.5"><circle cx="183.9" cy="720" r="4.2"/><path d="M181.9 713.7 h4 M183.9 714 v1.5 M187.70000000000002 715.5 l1.5 -1.5 M183.9 720 l1.8 -1.8"/></g>
<g stroke="#fff" fill="none" stroke-width="1.5"><circle cx="183.9" cy="743.2" r="4.2"/><path d="M181.9 736.9000000000001 h4 M183.9 737.2 v1.5 M187.70000000000002 738.7 l1.5 -1.5 M183.9 743.2 l1.8 -1.8"/></g>
<rect x="648" y="661" width="8" height="177" fill="#d6dde5"/>
<path d="M437.5,666.5 L441.7,666.5 L439.5,671.5 L442.2,671.5 L436.2,679.5 L437.9,673.8 L435.4,673.8 Z" fill="#fff" stroke="#fff" stroke-width="0.9" stroke-linejoin="round"/>
<circle cx="438.7" cy="692.8" r="3.2" fill="#fff"/><path d="M432.7,701.8 Q432.7,696.3 436.7,696.3 H440.7 Q444.7,696.3 444.7,701.8 Z" fill="#fff"/>
<path d="M437.5,711.3 L441.7,711.3 L439.5,716.3 L442.2,716.3 L436.2,724.3 L437.9,718.5999999999999 L435.4,718.5999999999999 Z" fill="#fff" stroke="#fff" stroke-width="0.9" stroke-linejoin="round"/>
<path d="M437.5,734.1 L441.7,734.1 L439.5,739.1 L442.2,739.1 L436.2,747.1 L437.9,741.4 L435.4,741.4 Z" fill="#fff" stroke="#fff" stroke-width="0.9" stroke-linejoin="round"/>
<circle cx="438.7" cy="760" r="3.2" fill="#fff"/><path d="M432.7,769 Q432.7,763.5 436.7,763.5 H440.7 Q444.7,763.5 444.7,769 Z" fill="#fff"/>
<circle cx="438.7" cy="782.8" r="3.2" fill="#fff"/><path d="M432.7,791.8 Q432.7,786.3 436.7,786.3 H440.7 Q444.7,786.3 444.7,791.8 Z" fill="#fff"/>
<circle cx="438.7" cy="804.8" r="3.2" fill="#fff"/><path d="M432.7,813.8 Q432.7,808.3 436.7,808.3 H440.7 Q444.7,808.3 444.7,813.8 Z" fill="#fff"/>
<circle cx="438.7" cy="827.2" r="3.2" fill="#fff"/><path d="M432.7,836.2 Q432.7,830.7 436.7,830.7 H440.7 Q444.7,830.7 444.7,836.2 Z" fill="#fff"/>
<defs><linearGradient id="hb" x1="0" y1="0" x2="0" y2="1"><stop offset="0" stop-color="#3ea6f2"/><stop offset="1" stop-color="#1a64c4"/></linearGradient>
<linearGradient id="hg" x1="0" y1="0" x2="0" y2="1"><stop offset="0" stop-color="#c8c8c8"/><stop offset="1" stop-color="#8a8a8a"/></linearGradient></defs>
<path d="M688.3,666.6 H704.3 Q705.8,666.6 705.8,668.1 V678.6 Q705.8,680.1 704.3,680.1 H693.8 L690.8,683.1 V680.1 H688.3 Q686.8,680.1 686.8,678.6 V668.1 Q686.8,666.6 688.3,666.6 Z" fill="url(#hb)"/>
<rect x="689.8" y="670.1" width="11" height="1.8" fill="#fff"/><rect x="689.8" y="673.6" width="7.5" height="1.8" fill="#fff"/>
<path d="M688.3,692.1 H704.3 Q705.8,692.1 705.8,693.6 V704.1 Q705.8,705.6 704.3,705.6 H693.8 L690.8,708.6 V705.6 H688.3 Q686.8,705.6 686.8,704.1 V693.6 Q686.8,692.1 688.3,692.1 Z" fill="url(#hb)"/>
<rect x="689.8" y="695.6" width="11" height="1.8" fill="#fff"/><rect x="689.8" y="699.1" width="7.5" height="1.8" fill="#fff"/>
<path d="M688.3,718.2 H704.3 Q705.8,718.2 705.8,719.7 V730.2 Q705.8,731.7 704.3,731.7 H693.8 L690.8,734.7 V731.7 H688.3 Q686.8,731.7 686.8,730.2 V719.7 Q686.8,718.2 688.3,718.2 Z" fill="url(#hg)"/>
<rect x="689.8" y="721.7" width="11" height="1.8" fill="#fff"/><rect x="689.8" y="725.2" width="7.5" height="1.8" fill="#fff"/>
<path d="M703,683 Q703,678.5 705.5,678.5 Q708,678.5 708,683 L709,684.5 H702 Z" fill="#f2b400"/>
<path d="M705.3,703 Q708,706 706.5,709.5 Q705,711 703.5,709.5 Q702.5,706.5 705.3,703 Z" fill="#e8401a"/><circle cx="705.3" cy="708" r="1.2" fill="#ffd24a"/>
</svg>
<div class="lbl" style="left:194.3px;top:665.7px;font-size:12px;line-height:16px">cumulatedpending</div>
<div class="lbl" style="left:194.3px;top:688.8px;font-size:12px;line-height:16px">providerstopwatch</div>
<div class="lbl" style="left:194.3px;top:712.0px;font-size:12px;line-height:16px">tto</div>
<div class="lbl" style="left:194.3px;top:735.2px;font-size:12px;line-height:16px">ttr</div>
<div class="lbl" style="left:449.3px;top:665.4px;font-size:12px;line-height:16px;letter-spacing:-0.25px">ev_approve</div>
<div class="lbl" style="left:449.3px;top:688.2px;font-size:12px;line-height:16px;letter-spacing:-0.25px">ev_assign</div>
<div class="lbl" style="left:449.3px;top:710.2px;font-size:12px;line-height:16px;letter-spacing:-0.25px">ev_autoclose</div>
<div class="lbl" style="left:449.3px;top:733.0px;font-size:12px;line-height:16px;letter-spacing:-0.25px">ev_autoresolve</div>
<div class="lbl" style="left:449.3px;top:755.4px;font-size:12px;line-height:16px;letter-spacing:-0.25px">ev_close</div>
<div class="lbl" style="left:449.3px;top:778.2px;font-size:12px;line-height:16px;letter-spacing:-0.25px">ev_dispatch</div>
<div class="lbl" style="left:449.3px;top:800.2px;font-size:12px;line-height:16px;letter-spacing:-0.25px">ev_pending</div>
<div class="lbl" style="left:449.3px;top:822.6px;font-size:12px;line-height:16px;letter-spacing:-0.25px">ev_pending_provider</div>
<div class="lbl" style="left:711.6px;top:666.6px;font-size:12px;line-height:16px;letter-spacing:-0.4px">warning</div>
<div class="lbl" style="left:765.4px;top:666.6px;font-size:12px;line-height:16px;letter-spacing:-0.4px">Orange</div>
<div class="lbl" style="left:711.6px;top:692.1px;font-size:12px;line-height:16px;letter-spacing:-0.4px">critical</div>
<div class="lbl" style="left:765.4px;top:692.1px;font-size:12px;line-height:16px;letter-spacing:-0.4px">Red</div>
<div class="lbl" style="left:711.6px;top:718.2px;font-size:12px;line-height:16px;letter-spacing:-0.4px">closed</div>
<div class="lbl" style="left:765.4px;top:718.2px;font-size:12px;line-height:16px;letter-spacing:-0.4px">None</div>
<!-- right panel -->
<style>.fl{position:absolute;font-weight:bold;font-size:12px;line-height:16px;white-space:nowrap}.bd{position:absolute;background:#c9ebc9;border-radius:3px;color:#8e8e8e;font-size:11px;letter-spacing:-0.1px;line-height:16px;white-space:nowrap}.bd.rw{background:transparent;border:1px solid #777}.eb{position:absolute;left:1216px;width:41px;background:#555;border:1px solid #606060}</style>
<div class="a" style="left:942px;top:170px;width:326px;height:147px;border:1px solid #5e5e5e"></div>
<div class="a" style="left:952px;top:155px;width:107px;height:30px;background:#555"></div>
<div class="fl" style="left:958.6px;top:163.5px;letter-spacing:0.05px">State Properties</div>
<div class="fl" style="left:955px;top:194px">Code</div>
<div class="a" style="left:1065px;top:192.5px;width:151px;height:18px;background:#fff;border:1px solid #8a8a9a"></div>
<div class="lbl" style="left:1068.5px;top:194px;font-size:12px;line-height:16px;color:#000">assigned</div>
<div class="fl" style="left:955px;top:219px">Label</div>
<div class="a" style="left:1065px;top:217.5px;width:151px;height:18px;background:#fff;border:1px solid #8a8a9a"></div>
<div class="lbl" style="left:1068.5px;top:219px;font-size:12px;line-height:16px;color:#000">Assigned</div>
<svg class="a" style="left:1201px;top:221.5px" width="14" height="10"><rect width="14" height="10" fill="#e88"/><rect y="1.5" width="14" height="1.3" fill="#fff" opacity=".8"/><rect y="4.3" width="14" height="1.3" fill="#fff" opacity=".8"/><rect y="7.1" width="14" height="1.3" fill="#fff" opacity=".8"/><rect width="6.5" height="5.5" fill="#6a7fc0"/></svg>
<div class="fl" style="left:955px;top:246px">Default (i.e. initial)</div>
<div class="fl" style="left:955px;top:262.5px">State?</div>
<div class="lbl" style="left:1064px;top:255px;font-size:11.5px;line-height:16px;letter-spacing:-0.3px">No.</div>
<div class="a" style="left:1082px;top:242px;width:133px;height:39.5px;background:#555;border:1px solid #666"></div>
<div class="fl" style="left:1082px;top:248.5px;width:133px;text-align:center;line-height:14.7px;letter-spacing:-0.3px;color:#e2e2e2">Make "assigned" the<br>default</div>
<div class="fl" style="left:955px;top:290px;letter-spacing:-0.35px">Highlight Code</div>
<div class="a" style="left:1065px;top:288.5px;width:151px;height:18px;background:#e9e9ed;border:1px solid #767676;border-radius:3px"></div>
<div class="lbl" style="left:1069px;top:290px;font-size:12px;line-height:16px;color:#000">None</div>
<svg class="a" style="left:1200px;top:294px" width="10" height="7"><path d="M1.5 1.5 L5 5 L8.5 1.5" fill="none" stroke="#222" stroke-width="1.6"/></svg>
<div class="a" style="left:942px;top:342px;width:326px;height:469px;border:1px solid #5e5e5e"></div>
<div class="a" style="left:952px;top:327px;width:135px;height:30.5px;background:#555"></div>
<div class="fl" style="left:958.6px;top:334.5px">Behavior of the Fields</div>
<svg class="a" style="left:952px;top:364.5px" width="12" height="12"><rect width="12" height="12" rx="2" fill="#1a6fe0"/><path d="M2.5 6 L5 8.5 L9.5 3.3" fill="none" stroke="#fff" stroke-width="1.8"/></svg>
<div class="lbl" style="left:973px;top:362.8px;font-size:12px;line-height:16px">Inherit the flags from the state:</div>
<div class="a" style="left:959.5px;top:379.7px;width:133px;height:18px;background:#e9e9ed;border:1px solid #767676;border-radius:3px"></div>
<div class="lbl" style="left:964px;top:381px;font-size:12px;line-height:16px;color:#000">new</div>
<svg class="a" style="left:1077px;top:385px" width="10" height="7"><path d="M1.5 1.5 L5 5 L8.5 1.5" fill="none" stroke="#222" stroke-width="1.6"/></svg>
<div class="lbl" style="left:952.2px;top:402.8px;font-size:12px;line-height:16px">Hide inherited (or default) values</div>
<div class="a" style="left:1154.3px;top:397.6px;width:49.4px;height:25px;background:#0077a3"></div>
<div class="a" style="left:1203.7px;top:397.6px;width:53.7px;height:25px;background:#555"></div>
<div class="fl" style="left:1154.3px;top:402.5px;width:49.4px;text-align:center;font-size:12.5px">Hide</div>
<div class="fl" style="left:1203.7px;top:402.5px;width:53.7px;text-align:center;font-size:12.5px">Show</div>
<div class="fl" style="left:1010.3px;top:427px;font-size:11px">Field</div>
<div class="fl" style="left:1132.4px;top:427px;font-size:11px">Behavior</div>
<div class="fl" style="left:955px;top:473.9px;letter-spacing:-0.1px">agent_id</div>
<div class="eb" style="top:471.1px;height:21.9px"></div>
<div class="fl" style="left:955px;top:520.8px;letter-spacing:-0.1px">assignment_date</div>
<div class="eb" style="top:517.1px;height:22.8px"></div>
<div class="fl" style="left:955px;top:544.9px;letter-spacing:-0.1px">caller_id</div>
<div class="eb" style="top:542.1px;height:22.2px"></div>
<div class="fl" style="left:955px;top:571.0px;letter-spacing:-0.1px">escalation_flag</div>
<div class="eb" style="top:567.5px;height:22.0px"></div>
<div class="fl" style="left:955px;top:596.0px;letter-spacing:-0.1px">escalation_reason</div>
<div class="eb" style="top:592.5px;height:22.0px"></div>
<div class="fl" style="left:955px;top:621.3px;letter-spacing:-0.1px">pending_provider_delay</div>
<div class="eb" style="top:617.5px;height:21.5px"></div>
<div class="fl" style="left:955px;top:644.2px;letter-spacing:-0.1px">sla_tto_over</div>
<div class="eb" style="top:641px;height:21.5px"></div>
<div class="fl" style="left:955px;top:668.0px;letter-spacing:-0.1px">sla_tto_passed</div>
<div class="eb" style="top:665px;height:21.5px"></div>
<div class="fl" style="left:955px;top:714.9px;letter-spacing:-0.1px">team_id</div>
<div class="eb" style="top:711px;height:21.8px"></div>
<div class="fl" style="left:955px;top:761.2px;letter-spacing:-0.1px">tto_escalation_deadline</div>
<div class="eb" style="top:758px;height:22.0px"></div>
<div class="fl" style="left:955px;top:784.7px;letter-spacing:-0.1px">ttr_escalation_deadline</div>
<div class="eb" style="top:781.5px;height:21.5px"></div>
<div class="bd" style="left:1116px;top:447.8px;width:76.6px;height:21.0px;padding-left:19.8px;line-height:22.6px">Mandatory</div>
<div class="bd" style="left:1116.8px;top:471.1px;width:73.9px;height:21.3px;padding-left:20.5px;line-height:22.9px">Read-only</div>
<div class="bd" style="left:1112.3px;top:494.4px;width:84.6px;height:21.3px;padding-left:19.3px;line-height:22.9px">Must prompt</div>
<div class="bd" style="left:1116.8px;top:518.3px;width:73.9px;height:20.4px;padding-left:20.5px;line-height:22.0px">Read-only</div>
<div class="bd rw" style="left:1114.3px;top:541.6px;width:79.5px;height:23.2px;padding-left:20px;line-height:22.8px">Read-write</div>
<div class="bd rw" style="left:1114.3px;top:567.1px;width:79.5px;height:22.7px;padding-left:20px;line-height:22.3px">Read-write</div>
<div class="bd rw" style="left:1114.3px;top:592.4px;width:79.5px;height:22.4px;padding-left:20px;line-height:22.0px">Read-write</div>
<div class="bd" style="left:1116.8px;top:617.4px;width:73.9px;height:21.3px;padding-left:20.5px;line-height:22.9px">Read-only</div>
<div class="bd" style="left:1116.8px;top:641.4px;width:73.9px;height:20.4px;padding-left:20.5px;line-height:22.0px">Read-only</div>
<div class="bd" style="left:1116.8px;top:665px;width:73.9px;height:21.0px;padding-left:20.5px;line-height:22.6px">Read-only</div>
<div class="bd" style="left:1116px;top:688.2px;width:76.6px;height:21.3px;padding-left:19.8px;line-height:22.9px">Mandatory</div>
<div class="bd" style="left:1116.8px;top:711.5px;width:73.9px;height:21.3px;padding-left:20.5px;line-height:22.9px">Read-only</div>
<div class="bd" style="left:1112.3px;top:735px;width:84.6px;height:20.8px;padding-left:19.3px;line-height:22.4px">Must prompt</div>
<div class="bd" style="left:1125px;top:757.8px;width:57.7px;height:21.9px;padding-left:20.2px;line-height:23.5px">Hidden</div>
<div class="bd" style="left:1116.8px;top:782px;width:73.9px;height:20.7px;padding-left:20.5px;line-height:22.3px">Read-only</div>
<svg class="a" style="left:0;top:0;z-index:2" width="1285" height="838">
<path d="M1127.3,453.3 L1132.4,462.3 H1122.2 Z" fill="#222" stroke="#222" stroke-width="0.6" stroke-linejoin="round"/><rect x="1126.7" y="456.3" width="1.3" height="3.2" fill="#c9ebc9"/><rect x="1126.7" y="460.2" width="1.3" height="1.2" fill="#c9ebc9"/>
<rect x="1126.1" y="479.95" width="6.4" height="5.6" rx="0.8" fill="#222"/><path d="M1127.6,479.95 V478.75 A1.7 1.7 0 0 1 1131.0,478.75 V479.95" fill="none" stroke="#222" stroke-width="1.3"/>
<path d="M1120.5,500.55 H1127.3999999999999 Q1128.2,500.55 1128.2,501.35 V505.75 Q1128.2,506.55 1127.3999999999999,506.55 H1124.6 L1123.0,509.05 V506.55 H1120.5 Q1119.7,506.55 1119.7,505.75 V501.35 Q1119.7,500.55 1120.5,500.55 Z" fill="none" stroke="#333" stroke-width="1.1"/><path d="M1121.6,502.65000000000003 H1126.3 M1121.6,504.55 H1124.8" stroke="#333" stroke-width="0.9"/>
<rect x="1126.1" y="526.7" width="6.4" height="5.6" rx="0.8" fill="#222"/><path d="M1127.6,526.7 V525.5 A1.7 1.7 0 0 1 1131.0,525.5 V526.7" fill="none" stroke="#222" stroke-width="1.3"/>
<rect x="1125.5" y="551.7" width="6" height="5.2" rx="0.8" fill="none" stroke="#aaa" stroke-width="1.1"/><path d="M1122.8999999999999,550.0 A1.8 1.8 0 0 1 1126.5,549.6 V551.7" fill="none" stroke="#aaa" stroke-width="1.2"/>
<rect x="1125.5" y="576.95" width="6" height="5.2" rx="0.8" fill="none" stroke="#aaa" stroke-width="1.1"/><path d="M1122.8999999999999,575.25 A1.8 1.8 0 0 1 1126.5,574.85 V576.95" fill="none" stroke="#aaa" stroke-width="1.2"/>
<rect x="1125.5" y="602.0999999999999" width="6" height="5.2" rx="0.8" fill="none" stroke="#aaa" stroke-width="1.1"/><path d="M1122.8999999999999,600.3999999999999 A1.8 1.8 0 0 1 1126.5,599.9999999999999 V602.0999999999999" fill="none" stroke="#aaa" stroke-width="1.2"/>
<rect x="1126.1" y="626.25" width="6.4" height="5.6" rx="0.8" fill="#222"/><path d="M1127.6,626.25 V625.05 A1.7 1.7 0 0 1 1131.0,625.05 V626.25" fill="none" stroke="#222" stroke-width="1.3"/>
<rect x="1126.1" y="649.8" width="6.4" height="5.6" rx="0.8" fill="#222"/><path d="M1127.6,649.8 V648.5999999999999 A1.7 1.7 0 0 1 1131.0,648.5999999999999 V649.8" fill="none" stroke="#222" stroke-width="1.3"/>
<rect x="1126.1" y="673.7" width="6.4" height="5.6" rx="0.8" fill="#222"/><path d="M1127.6,673.7 V672.5 A1.7 1.7 0 0 1 1131.0,672.5 V673.7" fill="none" stroke="#222" stroke-width="1.3"/>
<path d="M1127.3,693.85 L1132.4,702.85 H1122.2 Z" fill="#222" stroke="#222" stroke-width="0.6" stroke-linejoin="round"/><rect x="1126.7" y="696.85" width="1.3" height="3.2" fill="#c9ebc9"/><rect x="1126.7" y="700.75" width="1.3" height="1.2" fill="#c9ebc9"/>
<rect x="1126.1" y="720.35" width="6.4" height="5.6" rx="0.8" fill="#222"/><path d="M1127.6,720.35 V719.15 A1.7 1.7 0 0 1 1131.0,719.15 V720.35" fill="none" stroke="#222" stroke-width="1.3"/>
<path d="M1120.5,740.9 H1127.3999999999999 Q1128.2,740.9 1128.2,741.6999999999999 V746.1 Q1128.2,746.9 1127.3999999999999,746.9 H1124.6 L1123.0,749.4 V746.9 H1120.5 Q1119.7,746.9 1119.7,746.1 V741.6999999999999 Q1119.7,740.9 1120.5,740.9 Z" fill="none" stroke="#333" stroke-width="1.1"/><path d="M1121.6,743.0 H1126.3 M1121.6,744.9 H1124.8" stroke="#333" stroke-width="0.9"/>
<rect x="1133" y="763.95" width="8" height="1.5" fill="#222"/><rect x="1135.5" y="762.95" width="3" height="1.2" fill="#222"/><path d="M1133.6,765.95 H1140.4 L1139.8,773.55 H1134.2 Z" fill="#222"/>
<rect x="1126.1" y="790.5500000000001" width="6.4" height="5.6" rx="0.8" fill="#222"/><path d="M1127.6,790.5500000000001 V789.35 A1.7 1.7 0 0 1 1131.0,789.35 V790.5500000000001" fill="none" stroke="#222" stroke-width="1.3"/>
<path d="M1232.9,485.65000000000003 L1233.5,483.65000000000003 L1238.3,478.85 L1239.7,480.25 L1234.9,485.05 Z" fill="#d0d0d0"/><path d="M1238.9,478.25 L1239.6,477.55 L1241.0,478.95 L1240.3,479.65000000000003 Z" fill="#d0d0d0"/>
<path d="M1232.9,532.1 L1233.5,530.1 L1238.3,525.3 L1239.7,526.7 L1234.9,531.5 Z" fill="#d0d0d0"/><path d="M1238.9,524.7 L1239.6,524.0 L1241.0,525.4 L1240.3,526.1 Z" fill="#d0d0d0"/>
<path d="M1232.9,556.8000000000001 L1233.5,554.8000000000001 L1238.3,550.0 L1239.7,551.4000000000001 L1234.9,556.2 Z" fill="#d0d0d0"/><path d="M1238.9,549.4000000000001 L1239.6,548.7 L1241.0,550.1 L1240.3,550.8000000000001 Z" fill="#d0d0d0"/>
<path d="M1232.9,582.1 L1233.5,580.1 L1238.3,575.3 L1239.7,576.7 L1234.9,581.5 Z" fill="#d0d0d0"/><path d="M1238.9,574.7 L1239.6,574.0 L1241.0,575.4 L1240.3,576.1 Z" fill="#d0d0d0"/>
<path d="M1232.9,607.1 L1233.5,605.1 L1238.3,600.3 L1239.7,601.7 L1234.9,606.5 Z" fill="#d0d0d0"/><path d="M1238.9,599.7 L1239.6,599.0 L1241.0,600.4 L1240.3,601.1 Z" fill="#d0d0d0"/>
<path d="M1232.9,631.85 L1233.5,629.85 L1238.3,625.05 L1239.7,626.45 L1234.9,631.25 Z" fill="#d0d0d0"/><path d="M1238.9,624.45 L1239.6,623.75 L1241.0,625.15 L1240.3,625.85 Z" fill="#d0d0d0"/>
<path d="M1232.9,655.35 L1233.5,653.35 L1238.3,648.55 L1239.7,649.95 L1234.9,654.75 Z" fill="#d0d0d0"/><path d="M1238.9,647.95 L1239.6,647.25 L1241.0,648.65 L1240.3,649.35 Z" fill="#d0d0d0"/>
<path d="M1232.9,679.35 L1233.5,677.35 L1238.3,672.55 L1239.7,673.95 L1234.9,678.75 Z" fill="#d0d0d0"/><path d="M1238.9,671.95 L1239.6,671.25 L1241.0,672.65 L1240.3,673.35 Z" fill="#d0d0d0"/>
<path d="M1232.9,725.5 L1233.5,723.5 L1238.3,718.6999999999999 L1239.7,720.1 L1234.9,724.9 Z" fill="#d0d0d0"/><path d="M1238.9,718.1 L1239.6,717.4 L1241.0,718.8 L1240.3,719.5 Z" fill="#d0d0d0"/>
<path d="M1232.9,772.6 L1233.5,770.6 L1238.3,765.8 L1239.7,767.2 L1234.9,772.0 Z" fill="#d0d0d0"/><path d="M1238.9,765.2 L1239.6,764.5 L1241.0,765.9 L1240.3,766.6 Z" fill="#d0d0d0"/>
<path d="M1232.9,795.85 L1233.5,793.85 L1238.3,789.05 L1239.7,790.45 L1234.9,795.25 Z" fill="#d0d0d0"/><path d="M1238.9,788.45 L1239.6,787.75 L1241.0,789.15 L1240.3,789.85 Z" fill="#d0d0d0"/>
</svg>
<svg class="a" style="left:0;top:0" width="1285" height="838"><g fill="#a0a0a0">
<path d="M155.8 486.8 L151.3 490 L155.8 493.2 Z"/>
<path d="M933.1 532.7 L937.6 535.9 L933.1 539.1 Z"/>
<path d="M542.7 630 L550 630 L546.35 633.8 Z"/>
</g></svg>
<!-- right scrollbar -->
<div class="a" style="left:1277px;top:146px;width:8px;height:692px;background:#d6dde5"></div>
</body></html>
